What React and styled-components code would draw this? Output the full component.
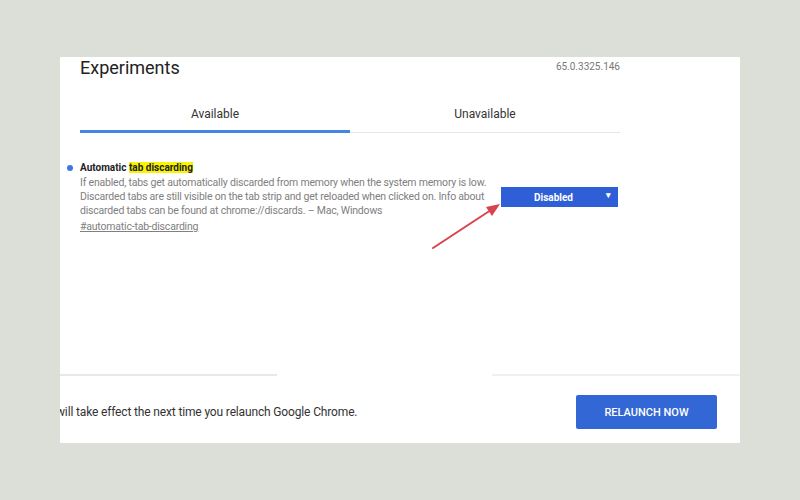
import React from 'react';
import styled, { createGlobalStyle } from 'styled-components';

const GlobalStyle = createGlobalStyle`
    html, body {
        margin: 0;
        padding: 0;
        background: #dcdfd7;
        font-family: Roboto, 'Liberation Sans', sans-serif;
    }
`

const Page = styled.div`
    width: 800px;
    height: 500px;
    padding: 57px 0 0 60px;
    box-sizing: border-box;
`

const Panel = styled.div`
    position: relative;
    width: 680px;
    height: 386px;
    background: #fff;
    overflow: hidden;
    display: flex;
    flex-direction: column;
`

const Top = styled.div`
    padding: 0 120px 0 20px;
`

const HeaderRow = styled.div`
    display: flex;
    justify-content: space-between;
    align-items: flex-start;
`

const Title = styled.h1`
    margin: 0;
    font-size: 18px;
    line-height: 22px;
    font-weight: 400;
    color: #222;
`

const Version = styled.span`
    padding: 4px 0 0;
    font-size: 10px;
    color: #777;
`

const Tabs = styled.div`
    display: grid;
    grid-template-columns: 1fr 1fr;
    align-items: end;
    margin-top: 16px;
`

const Tab = styled.div`
    text-align: center;
    font-size: 12px;
    line-height: 16px;
    color: #333;
    padding: 11px 0 ${p => (p.$active ? '8px' : '10px')};
    border-bottom: ${p => (p.$active ? '3px solid #4484e2' : '1px solid #e6e6e6')};
`

const Experiment = styled.div`
    display: flex;
    align-items: flex-start;
    margin-top: 28px;
    padding-left: 7px;
`

const Dot = styled.span`
    width: 6px;
    height: 6px;
    border-radius: 50%;
    background: #3b78e7;
    margin-top: 4px;
    flex-shrink: 0;
`

const Body = styled.div`
    width: 410px;
    margin-left: 7px;
    font-size: 10.5px;
    letter-spacing: -0.2px;
    line-height: 14px;
    white-space: nowrap;
`

const ExpName = styled.div`
    font-size: 10px;
    font-weight: 700;
    letter-spacing: 0;
    color: #222;
    margin-bottom: 1px;
`

const Mark = styled.span`
    background: #f9f400;
`

const Desc = styled.div`
    color: #808080;
`

const Anchor = styled.a`
    display: block;
    margin-top: 2px;
    color: #808080;
    text-decoration: underline;
`

const Select = styled.div`
    margin: 26px 0 0 11px;
    width: 117px;
    height: 20px;
    box-sizing: border-box;
    background: #2e5fd7;
    color: #fff;
    font-size: 10px;
    font-weight: 700;
    display: flex;
    align-items: center;
    justify-content: center;
    position: relative;
    padding-right: 12px;

    &::after {
        content: '▾';
        position: absolute;
        right: 7px;
        top: 3px;
        font-size: 9px;
    }
`

const Spacer = styled.div`
    flex: 1;
`

const Divider = styled.div`
    display: flex;
    gap: 215px;
`

const Rule = styled.div`
    height: 2px;
    background: ${p => p.$light ? '#f0f0f0' : '#e8e8e8'};
    flex: ${p => p.$grow ? 1 : '0 0 217px'};
`

const Footer = styled.div`
    display: flex;
    align-items: center;
    justify-content: space-between;
    padding: 19px 23px 14px 0;
`

const Notice = styled.span`
    margin-left: -4px;
    font-size: 12px;
    letter-spacing: -0.15px;
    color: #333;
`

const Relaunch = styled.button`
    width: 141px;
    height: 34px;
    border: none;
    border-radius: 2px;
    background: #3367d6;
    color: #fff;
    font-family: Roboto, 'Liberation Sans', sans-serif;
    font-size: 11px;
    font-weight: 500;
`

const Arrow = styled.svg`
    position: absolute;
    left: 368px;
    top: 140px;
`

const App = () => {
    return (
        <>
            <GlobalStyle />
            <Page>
                <Panel>
                    <Top>
                        <HeaderRow>
                            <Title>Experiments</Title>
                            <Version>65.0.3325.146</Version>
                        </HeaderRow>
                        <Tabs>
                            <Tab $active>Available</Tab>
                            <Tab>Unavailable</Tab>
                        </Tabs>
                    </Top>
                    <Experiment>
                        <Dot />
                        <Body>
                            <ExpName>Automatic <Mark>tab discarding</Mark></ExpName>
                            <Desc>
                                If enabled, tabs get automatically discarded from memory when the system memory is low.<br />
                                Discarded tabs are still visible on the tab strip and get reloaded when clicked on. Info about<br />
                                discarded tabs can be found at chrome://discards. – Mac, Windows
                            </Desc>
                            <Anchor>#automatic-tab-discarding</Anchor>
                        </Body>
                        <Select>Disabled</Select>
                    </Experiment>
                    <Spacer />
                    <Divider>
                        <Rule />
                        <Rule $grow $light />
                    </Divider>
                    <Footer>
                        <Notice>will take effect the next time you relaunch Google Chrome.</Notice>
                        <Relaunch>RELAUNCH NOW</Relaunch>
                    </Footer>
                    {/* red annotation arrow */}
                    <Arrow width="80" height="60" viewBox="0 0 80 60">
                        <line x1="5" y1="51" x2="66" y2="11" stroke="#d8434d" strokeWidth="2" strokeLinecap="round" />
                        <polygon points="72,7 58,10 64,19" fill="#d8434d" />
                    </Arrow>
                </Panel>
            </Page>
        </>
    )
}

export default App;
